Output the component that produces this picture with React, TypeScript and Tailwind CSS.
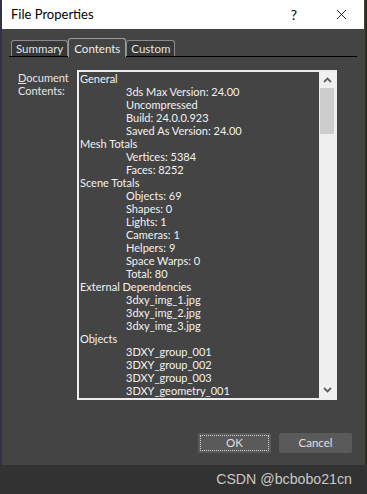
import { X } from "lucide-react";

type Row = { text: string; indent?: boolean };

const rows: Row[] = [
  { text: "General" },
  { text: "3ds Max Version: 24.00", indent: true },
  { text: "Uncompressed", indent: true },
  { text: "Build: 24.0.0.923", indent: true },
  { text: "Saved As Version: 24.00", indent: true },
  { text: "Mesh Totals" },
  { text: "Vertices: 5384", indent: true },
  { text: "Faces: 8252", indent: true },
  { text: "Scene Totals" },
  { text: "Objects: 69", indent: true },
  { text: "Shapes: 0", indent: true },
  { text: "Lights: 1", indent: true },
  { text: "Cameras: 1", indent: true },
  { text: "Helpers: 9", indent: true },
  { text: "Space Warps: 0", indent: true },
  { text: "Total: 80", indent: true },
  { text: "External Dependencies" },
  { text: "3dxy_img_1.jpg", indent: true },
  { text: "3dxy_img_2.jpg", indent: true },
  { text: "3dxy_img_3.jpg", indent: true },
  { text: "Objects" },
  { text: "3DXY_group_001", indent: true },
  { text: "3DXY_group_002", indent: true },
  { text: "3DXY_group_003", indent: true },
  { text: "3DXY_geometry_001", indent: true },
  { text: "3DXY_geometry_002", indent: true },
];

function Tab({ label, active }: { label: string; active?: boolean }) {
  return (
    <div
      className={
        active
          ? "-mb-px h-[19px] rounded-t-[3px] border border-b-0 border-[#9a9a9a] bg-[#444444] px-[5px] pt-[2px] text-[11.5px] leading-[15px] text-[#eeeeee]"
          : "mt-[2px] h-[16px] rounded-t-[3px] border border-b-0 border-[#8a8a8a] bg-[#383838] px-[4px] text-[11.5px] leading-[15px] text-[#e4e4e4]"
      }
    >
      {label}
    </div>
  );
}

function Chevron({ up }: { up?: boolean }) {
  return (
    <svg width="9" height="6" viewBox="0 0 9 6" className="block">
      <path
        d={up ? "M1 5 L4.5 1.5 L8 5" : "M1 1 L4.5 4.5 L8 1"}
        fill="none"
        stroke="#606060"
        strokeWidth="1.8"
      />
    </svg>
  );
}

export default function App() {
  return (
    <div className="flex h-[494px] w-[367px] flex-col overflow-hidden bg-[#323232] font-['Lato',sans-serif]">
      <div className="flex h-[465px]">
        <div className="w-[2px] bg-[#2e3440]" />
        <div className="flex w-[362px] flex-col bg-[#444444]">
          <div className="flex h-[29px] items-center bg-white pl-[9px] text-black">
            <span className="text-[13px] leading-none">File Properties</span>
            <span className="ml-auto text-[14px] leading-none">?</span>
            <X className="ml-[36px] mr-[14px]" size={17} strokeWidth={1.2} />
          </div>

          <div className="ml-[7px] mt-[9px] flex w-[348px] border-b border-black pl-[2px]">
            <Tab label="Summary" />
            <Tab label="Contents" active />
            <Tab label="Custom" />
          </div>

          <div className="mt-[13px] flex">
            <div className="ml-[16px] w-[59px] pt-[1px] text-[11px] leading-[13px] text-[#e6e6e6]">
              <span className="underline">D</span>ocument
              <br />
              Contents:
            </div>
            <div className="flex h-[330px] w-[260px] border-2 border-[#eeeeee] bg-[#444444]">
              <div className="flex-1 overflow-hidden pl-[1px] text-[11px] leading-[13px] text-[#f2f2f2]">
                {rows.map((r, i) => (
                  <div key={i} className={r.indent ? "whitespace-nowrap pl-[46px]" : "whitespace-nowrap"}>
                    {r.text}
                  </div>
                ))}
              </div>
              <div className="flex w-[16px] flex-col bg-[#f0f0f0]">
                <div className="flex h-[16px] items-center justify-center">
                  <Chevron up />
                </div>
                <div className="mx-[1px] h-[46px] bg-[#cdcdcd]" />
                <div className="flex-1" />
                <div className="flex h-[16px] items-center justify-center">
                  <Chevron />
                </div>
              </div>
            </div>
          </div>

          <div className="mt-[33px] flex justify-end gap-[8px] pr-[12px]">
            <button className="flex h-[20px] w-[73px] items-center justify-center rounded-[2px] bg-[#5a5a5a] p-[2px] text-[11.5px] text-[#e0e0e0]">
              <span className="flex h-full w-full items-center justify-center border border-dotted border-[#d0d0d0]">
                OK
              </span>
            </button>
            <button className="flex h-[20px] w-[73px] items-center justify-center rounded-[2px] bg-[#5a5a5a] text-[11.5px] text-[#e0e0e0]">
              Cancel
            </button>
          </div>
        </div>
        <div className="w-[3px] border-l border-[#4a4430] bg-[#2c2c2c]" />
      </div>
      <div className="flex flex-1 items-center justify-end pr-[15px] font-['Liberation_Sans',sans-serif] text-[14.2px] text-[#c8c8c8]">
        CSDN @bcbobo21cn
      </div>
    </div>
  );
}
